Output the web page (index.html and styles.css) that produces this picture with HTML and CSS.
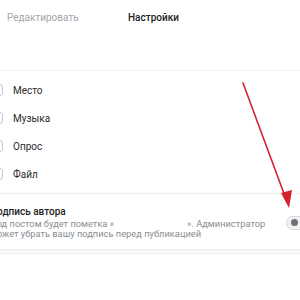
FILE: index.html
```html
<!DOCTYPE html>
<html lang="ru">
<head>
<meta charset="utf-8">
<link rel="stylesheet" href="styles.css">
</head>
<body>
<div class="page">
  <div class="header">
    <span class="tab tab-muted">Редактировать</span>
    <span class="tab tab-active">Настройки</span>
  </div>
  <div class="spacer"></div>
  <div class="list">
    <div class="row"><span class="icon"></span><span class="label">Место</span></div>
    <div class="row"><span class="icon"></span><span class="label">Музыка</span></div>
    <div class="row"><span class="icon"></span><span class="label">Опрос</span></div>
    <div class="row"><span class="icon"></span><span class="label">Файл</span></div>
  </div>
  <div class="setting">
    <div class="setting-text">
      <div class="setting-title">Подпись автора</div>
      <div class="setting-desc">Под постом будет пометка «<span class="blank"></span>». Администратор<br>может убрать вашу подпись перед публикацией</div>
    </div>
    <div class="toggle"><span class="knob"></span></div>
  </div>
  <div class="band"></div>
  <svg class="arrow" width="300" height="300" viewBox="0 0 300 300">
    <line x1="243" y1="83" x2="286" y2="199" stroke="#d4232e" stroke-width="1.6" stroke-linecap="round"/>
    <polygon points="289,208 281,193 292,190" fill="#d4232e"/>
  </svg>
</div>
</body>
</html>
```
FILE: styles.css
```css
html, body {
  margin: 0;
  padding: 0;
  background: #fff;
}
body {
  width: 300px;
  height: 300px;
  overflow: hidden;
  font-family: Roboto, "Liberation Sans", Arial, sans-serif;
  color: #222;
}
.page {
  position: relative;
  width: 300px;
  height: 300px;
  overflow: hidden;
}
.header {
  display: flex;
  align-items: center;
  height: 34px;
  padding-left: 7px;
}
.tab {
  font-size: 10px;
}
.tab-muted {
  color: #a3a6ab;
  width: 121px;
}
.tab-active {
  color: #222;
  font-weight: 500;
}
.spacer {
  height: 36px;
  border-bottom: 1px solid #f0f0f0;
}
.list {
  padding: 5px 0 5px 0;
  border-bottom: 1px solid #ececec;
}
.row {
  display: flex;
  align-items: center;
  height: 28px;
  margin-left: -9px;
}
.icon {
  width: 10px;
  height: 10px;
  border: 1px solid #c4c7cc;
  border-radius: 3px;
  margin-right: 10px;
}
.label {
  font-size: 10px;
  color: #2a2a2a;
}
.setting {
  display: flex;
  align-items: center;
  justify-content: space-between;
  height: 55px;
  margin-left: -10px;
  border-bottom: 1px solid #ececec;
}
.setting-text {
  padding-top: 1px;
}
.setting-title {
  font-size: 10px;
  font-weight: 500;
  color: #222;
  line-height: 14px;
  margin-bottom: 0;
}
.setting-desc {
  font-size: 9.3px;
  color: #8a8d91;
  line-height: 10px;
}
.blank {
  display: inline-block;
  width: 73px;
}
.toggle {
  width: 26px;
  height: 14px;
  border: 1px solid #d8d8d8;
  border-radius: 8px;
  background: #f2f2f2;
  margin-right: -12px;
  margin-top: 2px;
  display: flex;
  align-items: center;
  padding-left: 4px;
  box-sizing: border-box;
}
.knob {
  width: 7px;
  height: 7px;
  border-radius: 50%;
  background: #6c7079;
}
.band {
  height: 5px;
  background: #f6f6f6;
}
.arrow {
  position: absolute;
  left: 0;
  top: 0;
  pointer-events: none;
}
```
